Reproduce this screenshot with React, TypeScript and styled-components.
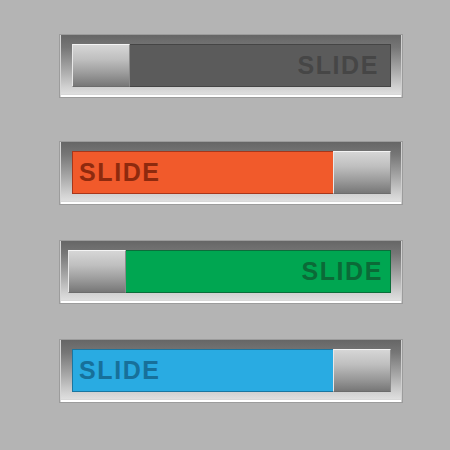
import React from "react";
import styled, { createGlobalStyle } from "styled-components";

const Global = createGlobalStyle`
  html, body { margin: 0; padding: 0; background: #b4b4b4; }
  body { width: 450px; height: 450px; overflow: hidden; font-family: "Liberation Sans", Arial, sans-serif; }
`;

const Page = styled.div`
  display: flex;
  flex-direction: column;
  align-items: flex-start;
  padding-left: 59px;
  width: 450px;
  height: 450px;
  box-sizing: border-box;
`;

const Frame = styled.div<{ $top: number; $left: number }>`
  margin-top: ${(p) => p.$top}px;
  width: 344px;
  height: 64px;
  box-sizing: border-box;
  padding: 9px 11px 10px ${(p) => p.$left}px;
  border: 1px solid #9c9c9c;
  background: linear-gradient(to bottom, #666666 0%, #767676 20%, #a6a6a6 55%, #d2d2d2 85%, #e4e4e4 100%);
  box-shadow: inset 1px 0 0 #d6d6d6, inset -1px 0 0 #cfcfcf, inset 0 -2px 0 #ffffff, inset 0 -3px 0 #d8d8d8;
`;

const Track = styled.div<{ $bg: string; $edge: string; $thumbRight: boolean }>`
  display: flex;
  flex-direction: ${(p) => (p.$thumbRight ? "row-reverse" : "row")};
  align-items: stretch;
  height: 43px;
  box-sizing: border-box;
  background: ${(p) => p.$bg};
  border: 1px solid ${(p) => p.$edge};
`;

const Thumb = styled.div`
  width: 58px;
  margin: -1px;
  flex: none;
  box-sizing: border-box;
  background: linear-gradient(to bottom, #d6d6d6 0%, #bfbfbf 35%, #9a9a9a 70%, #777777 100%);
  border-top: 1px solid #f4f4f4;
  border-left: 1px solid #e8e8e8;
  border-right: 1px solid #8a8a8a;
  border-bottom: 1px solid #6c6c6c;
`;

const Label = styled.div<{ $color: string; $right: boolean; $pad: number }>`
  flex: 1;
  display: flex;
  align-items: center;
  justify-content: ${(p) => (p.$right ? "flex-end" : "flex-start")};
  padding: ${(p) => (p.$right ? `0 ${p.$pad}px 0 0` : `0 0 0 ${p.$pad}px`)};
  color: ${(p) => p.$color};
  font-family: "Liberation Sans", Arial, sans-serif;
  font-weight: bold;
  font-size: 25px;
  letter-spacing: 1.6px;
  line-height: 1;
`;

type S = { top: number; left: number; bg: string; edge: string; text: string; thumbRight: boolean; pad: number };

const sliders: S[] = [
  { top: 34, left: 12, bg: "#5b5b5b", edge: "#454545", text: "#464646", thumbRight: false, pad: 11 },
  { top: 43, left: 12, bg: "#f15a2b", edge: "#a8361a", text: "#8e2a0e", thumbRight: true, pad: 6 },
  { top: 35, left: 8, bg: "#00a651", edge: "#0b6e3a", text: "#0b6a37", thumbRight: false, pad: 7 },
  { top: 35, left: 12, bg: "#29abe2", edge: "#1a76a0", text: "#17709a", thumbRight: true, pad: 6 },
];

export default function App() {
  return (
    <>
      <Global />
      <Page>
        {sliders.map((s, i) => (
          <Frame key={i} $top={s.top} $left={s.left}>
            <Track $bg={s.bg} $edge={s.edge} $thumbRight={s.thumbRight}>
              <Thumb />
              <Label $color={s.text} $right={!s.thumbRight} $pad={s.pad}>SLIDE</Label>
            </Track>
          </Frame>
        ))}
      </Page>
    </>
  );
}
